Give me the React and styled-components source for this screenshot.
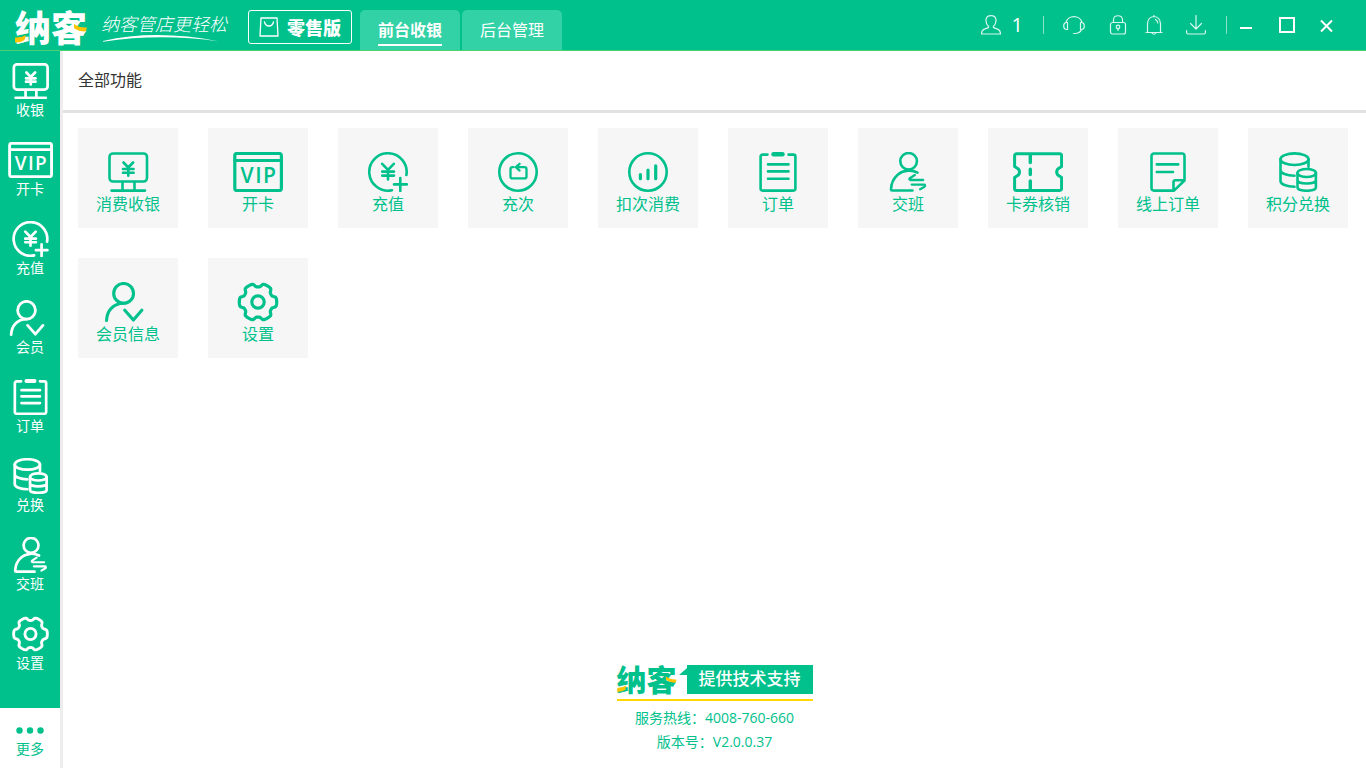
import React, { useState } from 'react';
import styled, { createGlobalStyle } from 'styled-components';

const GREEN = '#00c18c';
const YELLOW = '#ffc400';

const GlobalStyle = createGlobalStyle`
  * {
    box-sizing: border-box;
  }

  body {
    margin: 0;
    background: #fff;
    font-family: 'Open Sans', 'Noto Sans CJK SC', sans-serif;
    font-size: 14px;
  }

  button {
    padding: 0;
    border: none;
    background: none;
    font: inherit;
    color: inherit;
    cursor: pointer;
  }

  svg {
    display: block;
  }
`;

const AppContainer = styled.div`
  display: flex;
  flex-direction: column;
  min-height: 100vh;
`;

const Header = styled.header`
  display: flex;
  justify-content: space-between;
  height: 51px;
  background: ${GREEN};
  border-bottom: 1px solid #4bd16f;
  color: #fff;
`;

const Brand = styled.div`
  display: flex;
  align-items: flex-start;
  padding-left: 15px;
`;

const LogoBox = styled.div`
  position: relative;
  width: ${props => (props.$small ? 60 : 72)}px;
  height: ${props => (props.$small ? 28 : 34)}px;
  margin-top: ${props => (props.$small ? 0 : 10)}px;
`;

const LogoText = styled.span`
  display: block;
  font-family: 'Noto Sans CJK SC', sans-serif;
  font-size: ${props => (props.$small ? 30 : 36)}px;
  line-height: ${props => (props.$small ? 26 : 32)}px;
  font-weight: 900;
  white-space: nowrap;
`;

const LogoAccent = styled.svg`
  position: absolute;
  left: 0;
  top: 0;
  width: 100%;
  height: 100%;
`;

const Slogan = styled.div`
  width: 128px;
  margin: 12px 0 0 14px;
`;

const SloganText = styled.span`
  display: block;
  font-family: 'Noto Sans CJK SC', sans-serif;
  font-size: 18px;
  line-height: 22px;
  font-weight: 300;
  font-style: italic;
  white-space: nowrap;
`;

const Edition = styled.div`
  display: flex;
  align-items: center;
  gap: 8px;
  width: 104px;
  height: 34px;
  margin: 10px 8px 0 19px;
  padding-left: 10px;
  border: 1px solid #fff;
  border-radius: 3px;
  font-family: 'Noto Sans CJK SC', sans-serif;
  font-size: 18px;
  line-height: 28px;
  font-weight: 900;
  white-space: nowrap;
`;

const Tabs = styled.nav`
  display: flex;
  gap: 2px;
  padding-top: 10px;
`;

const Tab = styled.button`
  width: 100px;
  height: 40px;
  border-radius: 5px 5px 0 0;
  background: #33d1a6;
  font-size: 16px;
  font-weight: ${props => (props.$active ? 700 : 400)};
`;

const TabLabel = styled.span`
  display: inline-block;
  padding-top: 2px;
  line-height: 28px;
  border-bottom: 2px solid ${props => (props.$active ? '#fff' : 'transparent')};
`;

const Tools = styled.div`
  display: flex;
  align-items: center;
  padding-right: 19px;
`;

const ToolButton = styled.button`
  display: flex;
  align-items: center;
  gap: 11px;
  margin-left: ${props => props.$space || 0}px;
  font-size: 20px;
  line-height: 24px;
`;

const Divider = styled.span`
  width: 1px;
  height: 18px;
  margin-left: ${props => props.$space}px;
  background: #8ae3c8;
`;

const WindowButton = styled.button`
  display: flex;
  align-items: center;
  justify-content: center;
  width: 40px;
  height: 50px;
`;

const Body = styled.div`
  flex: 1;
  display: flex;
`;

const Sidebar = styled.aside`
  flex: none;
  display: flex;
  flex-direction: column;
  justify-content: space-between;
  width: 63px;
  border-right: 3px solid #ededed;
  background: ${GREEN};
`;

const SideList = styled.nav`
  display: flex;
  flex-direction: column;
  gap: 21px;
  padding-top: 12px;
`;

const SideItem = styled.button`
  display: flex;
  flex-direction: column;
  align-items: center;
  color: #fff;
  line-height: 22px;
`;

const MoreButton = styled.button`
  display: flex;
  flex-direction: column;
  align-items: center;
  gap: 4px;
  height: 60px;
  padding-top: 19px;
  background: #fff;
  color: ${GREEN};
  line-height: 22px;
`;

const Main = styled.main`
  flex: 1;
  display: flex;
  flex-direction: column;
`;

const Title = styled.h1`
  margin: 0;
  padding: 0 15px;
  border-bottom: 3px solid #e2e2e2;
  color: #333;
  font-size: 16px;
  line-height: 59px;
  font-weight: 400;
`;

const TileGrid = styled.div`
  flex: 1;
  display: grid;
  grid-template-columns: repeat(auto-fill, 100px);
  align-content: start;
  gap: 30px;
  padding: 15px;
`;

const Tile = styled.button`
  display: flex;
  flex-direction: column;
  align-items: center;
  height: 100px;
  padding-top: 24px;
  background: #f6f6f6;
  color: ${GREEN};
  font-size: 16px;
  line-height: 24px;
  white-space: nowrap;

  &:hover {
    background: #efefef;
  }
`;

const Footer = styled.footer`
  display: flex;
  flex-direction: column;
  align-items: center;
  padding-bottom: 14px;
  color: ${GREEN};
  line-height: 24px;
`;

const Support = styled.div`
  display: flex;
  width: 196px;
  margin-bottom: 5px;
  padding-bottom: 5px;
  border-bottom: 2px solid #ffd800;
`;

const SupportTail = styled.svg`
  width: 8px;
  height: 10px;
  margin: 3px 0 0 2px;
`;

const SupportLabel = styled.span`
  flex: 1;
  height: 29px;
  background: ${GREEN};
  color: #fff;
  font-size: 17px;
  font-weight: 500;
  line-height: 28px;
  text-align: center;
  white-space: nowrap;
`;

// Outline of the settings cog: six flat lobes around (25, 20)
const gearPath = () => {
  const points = [];
  for (let deg = 0; deg < 360; deg += 3) {
    const a = (deg * Math.PI) / 180;
    const r = 16.8 + 1.9 * Math.tanh(2.5 * Math.cos(6 * a) + 0.9);
    points.push(`${(25 + r * Math.cos(a)).toFixed(2)} ${(20 + r * Math.sin(a)).toFixed(2)}`);
  }
  return `M${points.join('L')}Z`;
};

// All drawn on a 50 x 40 box
const shapes = {
  cash: (
    <>
      <rect x="6.5" y="1.5" width="37.5" height="28" rx="3.5" />
      <path d="M19.5 30v8M31.5 30v8M8.5 38.6h33.5M20.5 10.5l4.8 5 4.8-5M20 17h10.6M20 20.8h10.6M25.3 16v7.8" />
    </>
  ),
  card: (
    <>
      <rect x="1.8" y="1.5" width="46.600" height="37" rx="2" strokeWidth="3.2" />
      <path d="M2 8.5h46" strokeWidth="3" />
      <text
        x="14 25.5 36.5"
        y="31"
        textAnchor="middle"
        fontFamily="Open Sans, sans-serif"
        fontSize="21"
        fontWeight="600"
        fill="currentColor"
        stroke="none"
      >
        VIP
      </text>
    </>
  ),
  recharge: (
    <>
      <path d="M43.4 23A18.7 18.7 0 1 0 29 38.2" />
      <path d="M37.3 26v13M31 32.4h12.8M19.2 11.8l5.8 6 5.8-6M19.2 19.6h11.8M19.2 23.6h11.8M25 18v9.5" />
    </>
  ),
  times: (
    <>
      <circle cx="25" cy="20" r="18.7" />
      <path d="M20.5 15.2h-1a2 2 0 0 0-2 2v7.2a2 2 0 0 0 2 2h12a2 2 0 0 0 2-2v-7.2a2 2 0 0 0-2-2h-8M26.6 11.8l-3.8 3.4 3.8 3.4" strokeWidth="2.3" />
    </>
  ),
  deduct: (
    <>
      <circle cx="25" cy="20" r="18.7" />
      <path d="M17.4 22.5v4.2M25 18v8.7M32.7 13.8v12.9" strokeWidth="3.2" />
    </>
  ),
  order: (
    <>
      <path d="M14.5 2.6H9.6a2 2 0 0 0-2 2V36.6a2 2 0 0 0 2 2h30.8a2 2 0 0 0 2-2V4.6a2 2 0 0 0-2-2H35.5M15 12.4h20.5M15 19.4h20.5M15 26.7h20.5" />
      <path d="M20.5 2.2h9" strokeWidth="4.4" />
    </>
  ),
  shift: (
    <>
      <circle cx="25.6" cy="9.3" r="8.3" />
      <path d="M34.5 20.6C29 17.6 20.5 17.8 15 22.5C10.5 26.3 8.2 31.5 8 37.4Q8 38.5 9.2 38.5H29.5" />
      <path d="M31.8 23l-5 3.2q-1.2 1.6.7 1.8h12.6M28.7 32.6h12.8q1.3 1.3-.4 2.4l-4 2.3" strokeWidth="2.3" />
    </>
  ),
  ticket: (
    <>
      <path d="M3.6 1.7h43a2 2 0 0 1 2 2V14.5l-3.8 2.5q-2.2 3 0 6l3.8 2.500V36.4a2 2 0 0 1-2 2h-43a2 2 0 0 1-2-2V25.5l3.8-2.5q2.2-3 0-6l-3.8-2.5V3.7a2 2 0 0 1 2-2z" strokeWidth="3" />
      <path d="M17.3 3v7.5M17.3 17.3v5.2M17.3 29v8" strokeWidth="3.4" />
    </>
  ),
  online: (
    <path d="M11 1.5h28a2.5 2.5 0 0 1 2.5 2.5V28.5L31 38.6H11a2.5 2.5 0 0 1-2.5-2.5V4A2.5 2.5 0 0 1 11 1.5zM41 28.2H32.5a2 2 0 0 0-2 2V38M13.8 12.4h21.4M13.8 20h16.2" />
  ),
  coins: (
    <>
      <ellipse cx="21.500" cy="7.2" rx="14" ry="5.8" />
      <path d="M7.5 7.2V29c0 3.2 6 5.7 14 5.7M35.5 7.2v7.5M7.5 18c0 3.2 6 5.700 14 5.7" />
      <ellipse cx="33.7" cy="21" rx="9.2" ry="4" />
      <path d="M24.5 21v14.5c0 4.300 18.400 4.300 18.400 0V21M24.500 28.300c0 4.300 18.400 4.300 18.400 0" />
    </>
  ),
  member: (
    <g strokeWidth="3.1">
      <circle cx="20.6" cy="11.4" r="9.9" />
      <path d="M3.5 38.5C4 28 10.5 21.5 20.6 21.3M21.8 28.2l8.600 9.800 8.400-9.800" />
    </g>
  ),
  settings: (
    <g strokeWidth="3.2">
      <path d={gearPath()} />
      <circle cx="25" cy="20" r="6.2" />
    </g>
  ),
};

const FeatureIcon = ({ name, width, stroke }) => (
  <svg
    width={width}
    height={width * 0.8}
    viewBox="0 0 50 40"
    fill="none"
    stroke="currentColor"
    strokeWidth={stroke}
    strokeLinecap="round"
    strokeLinejoin="round"
    aria-hidden="true"
  >
    {shapes[name]}
  </svg>
);

const ToolIcon = ({ width = 20, children }) => (
  <svg width={width} height="20" viewBox={`0 0 ${width} 20`} fill="none" stroke="#d8f7ee" strokeWidth="1.2" strokeLinecap="round" strokeLinejoin="round">
    {children}
  </svg>
);

const Logo = ({ small }) => (
  <LogoBox $small={small}>
    <LogoText $small={small}>纳客</LogoText>
    <LogoAccent viewBox="0 0 72 34" fill={YELLOW} aria-hidden="true">
      <path d="M0 27.500q6 .5 11-2.500l-1.500 5q-4 3-9.500 2.500zM59 14q5 4 13 3.500l-1.500 4q-7 0-11.500-3.500z" />
    </LogoAccent>
  </LogoBox>
);

const sideItems = [
  { icon: 'cash', label: '收银' },
  { icon: 'card', label: '开卡' },
  { icon: 'recharge', label: '充值' },
  { icon: 'member', label: '会员' },
  { icon: 'order', label: '订单' },
  { icon: 'coins', label: '兑换' },
  { icon: 'shift', label: '交班' },
  { icon: 'settings', label: '设置' },
];

const tiles = [
  { icon: 'cash', label: '消费收银' },
  { icon: 'card', label: '开卡' },
  { icon: 'recharge', label: '充值' },
  { icon: 'times', label: '充次' },
  { icon: 'deduct', label: '扣次消费' },
  { icon: 'order', label: '订单' },
  { icon: 'shift', label: '交班' },
  { icon: 'ticket', label: '卡券核销' },
  { icon: 'online', label: '线上订单' },
  { icon: 'coins', label: '积分兑换' },
  { icon: 'member', label: '会员信息' },
  { icon: 'settings', label: '设置' },
];

const tabs = ['前台收银', '后台管理'];

const App = () => {
  const [activeTab, setActiveTab] = useState(tabs[0]);

  return (
    <AppContainer>
      <GlobalStyle />
      <Header>
        <Brand>
          <Logo />
          <Slogan>
            <SloganText>纳客管店更轻松</SloganText>
            <svg width="120" height="9" viewBox="0 0 120 9" fill="#fff" aria-hidden="true">
              <path d="M2 7Q55-5 118 7.5Q60-1 2 7.8z" />
            </svg>
          </Slogan>
          <Edition>
            <svg width="20" height="20" viewBox="0 0 20 20" fill="none" stroke="#fff" strokeWidth="1.3" aria-hidden="true">
              <path d="M2 1h16l1 18H1zM5.5 5q1 4 4.5 4t4.5-4" strokeLinejoin="round" strokeLinecap="round" />
            </svg>
            零售版
          </Edition>
          <Tabs>
            {tabs.map((tab) => (
              <Tab key={tab} $active={tab === activeTab} onClick={() => setActiveTab(tab)}>
                <TabLabel $active={tab === activeTab}>{tab}</TabLabel>
              </Tab>
            ))}
          </Tabs>
        </Brand>
        <Tools>
          <ToolButton>
            <ToolIcon>
              <path d="M7.6 11.5C5 9 4.8 6.5 5 4.5C5.5 1.5 7.5.6 10 .6s4.5.9 5 3.900c.2 2 0 4.500-2.600 7q-.3 1 .8 1.400l4 1.500Q19.500 15.500 19.500 19H.5q0-3.500 2.300-4.600l4-1.500q1.100-.4.800-1.400z" />
            </ToolIcon>
            1
          </ToolButton>
          <Divider $space={20} />
          <ToolButton $space={19} aria-label="客服">
            <ToolIcon width={22}>
              <path d="M3 7.5a8.200 7.500 0 0 1 16 0M3 7.500h1.500v7H3q-2.300-.5-2.300-3.500T3 7.500zM19 7.500h-1.500v7H19q2.300-.5 2.300-3.500T19 7.500zM18.500 14.500q-1.500 4-7 4h-1" />
            </ToolIcon>
          </ToolButton>
          <ToolButton $space={24} aria-label="锁屏">
            <ToolIcon width={18}>
              <rect x="1.5" y="7.5" width="15" height="11.5" rx="2" />
              <path d="M4.500 7.500V4.500C5-.5 13-.5 13.500 4.500v3M9 13v2.500" />
              <circle cx="9" cy="12" r="1.8" />
            </ToolIcon>
          </ToolButton>
          <ToolButton $space={18} aria-label="消息">
            <ToolIcon width={18}>
              <path d="M2.500 17.500V8.500Q3 2 9 1.500q6 .5 6.500 7v9zM1 17.500h16M9 0v1.500M7 18q2 2.500 4 0M10.500 4.500q2 1 2.300 3.500" />
            </ToolIcon>
          </ToolButton>
          <ToolButton $space={23} aria-label="下载">
            <ToolIcon>
              <path d="M10 .5v13M4.500 8.500l5.500 5.500 5.500-5.500M.6 15.500v2q0 1.500 1.500 1.500h15.800q1.500 0 1.500-1.500v-2" />
            </ToolIcon>
          </ToolButton>
          <Divider $space={20} />
          <WindowButton aria-label="最小化">
            <svg width="16" height="16" viewBox="0 0 16 16" fill="#fff">
              <rect x="1" y="10" width="12" height="2" />
            </svg>
          </WindowButton>
          <WindowButton aria-label="最大化">
            <svg width="16" height="16" viewBox="0 0 16 16" fill="none" stroke="#fff" strokeWidth="2">
              <rect x="1" y="1" width="14" height="14" />
            </svg>
          </WindowButton>
          <WindowButton aria-label="关闭">
            <svg width="16" height="16" viewBox="0 0 16 16" fill="none" stroke="#fff" strokeWidth="2">
              <path d="M2 3.500l11 11M13 3.500l-11 11" />
            </svg>
          </WindowButton>
        </Tools>
      </Header>

      <Body>
        <Sidebar>
          <SideList>
            {sideItems.map((item) => (
              <SideItem key={item.icon}>
                <FeatureIcon name={item.icon} width={45} stroke={3} />
                {item.label}
              </SideItem>
            ))}
          </SideList>
          <MoreButton>
            <svg width="28" height="7" viewBox="0 0 28 7" fill="currentColor" aria-hidden="true">
              <circle cx="3.5" cy="3.5" r="3.2" />
              <circle cx="14" cy="3.5" r="3.2" />
              <circle cx="24.5" cy="3.5" r="3.2" />
            </svg>
            更多
          </MoreButton>
        </Sidebar>

        <Main>
          <Title>全部功能</Title>
          <TileGrid>
            {tiles.map((tile) => (
              <Tile key={tile.icon}>
                <FeatureIcon name={tile.icon} width={50} stroke={2.6} />
                {tile.label}
              </Tile>
            ))}
          </TileGrid>
          <Footer>
            <Support>
              <Logo small />
              <SupportTail viewBox="0 0 8 10" fill={GREEN} aria-hidden="true">
                <path d="M0 7L8 0v7z" />
              </SupportTail>
              <SupportLabel>提供技术支持</SupportLabel>
            </Support>
            <span>服务热线：4008-760-660</span>
            <span>版本号：V2.0.0.37</span>
          </Footer>
        </Main>
      </Body>
    </AppContainer>
  );
};

export default App;
